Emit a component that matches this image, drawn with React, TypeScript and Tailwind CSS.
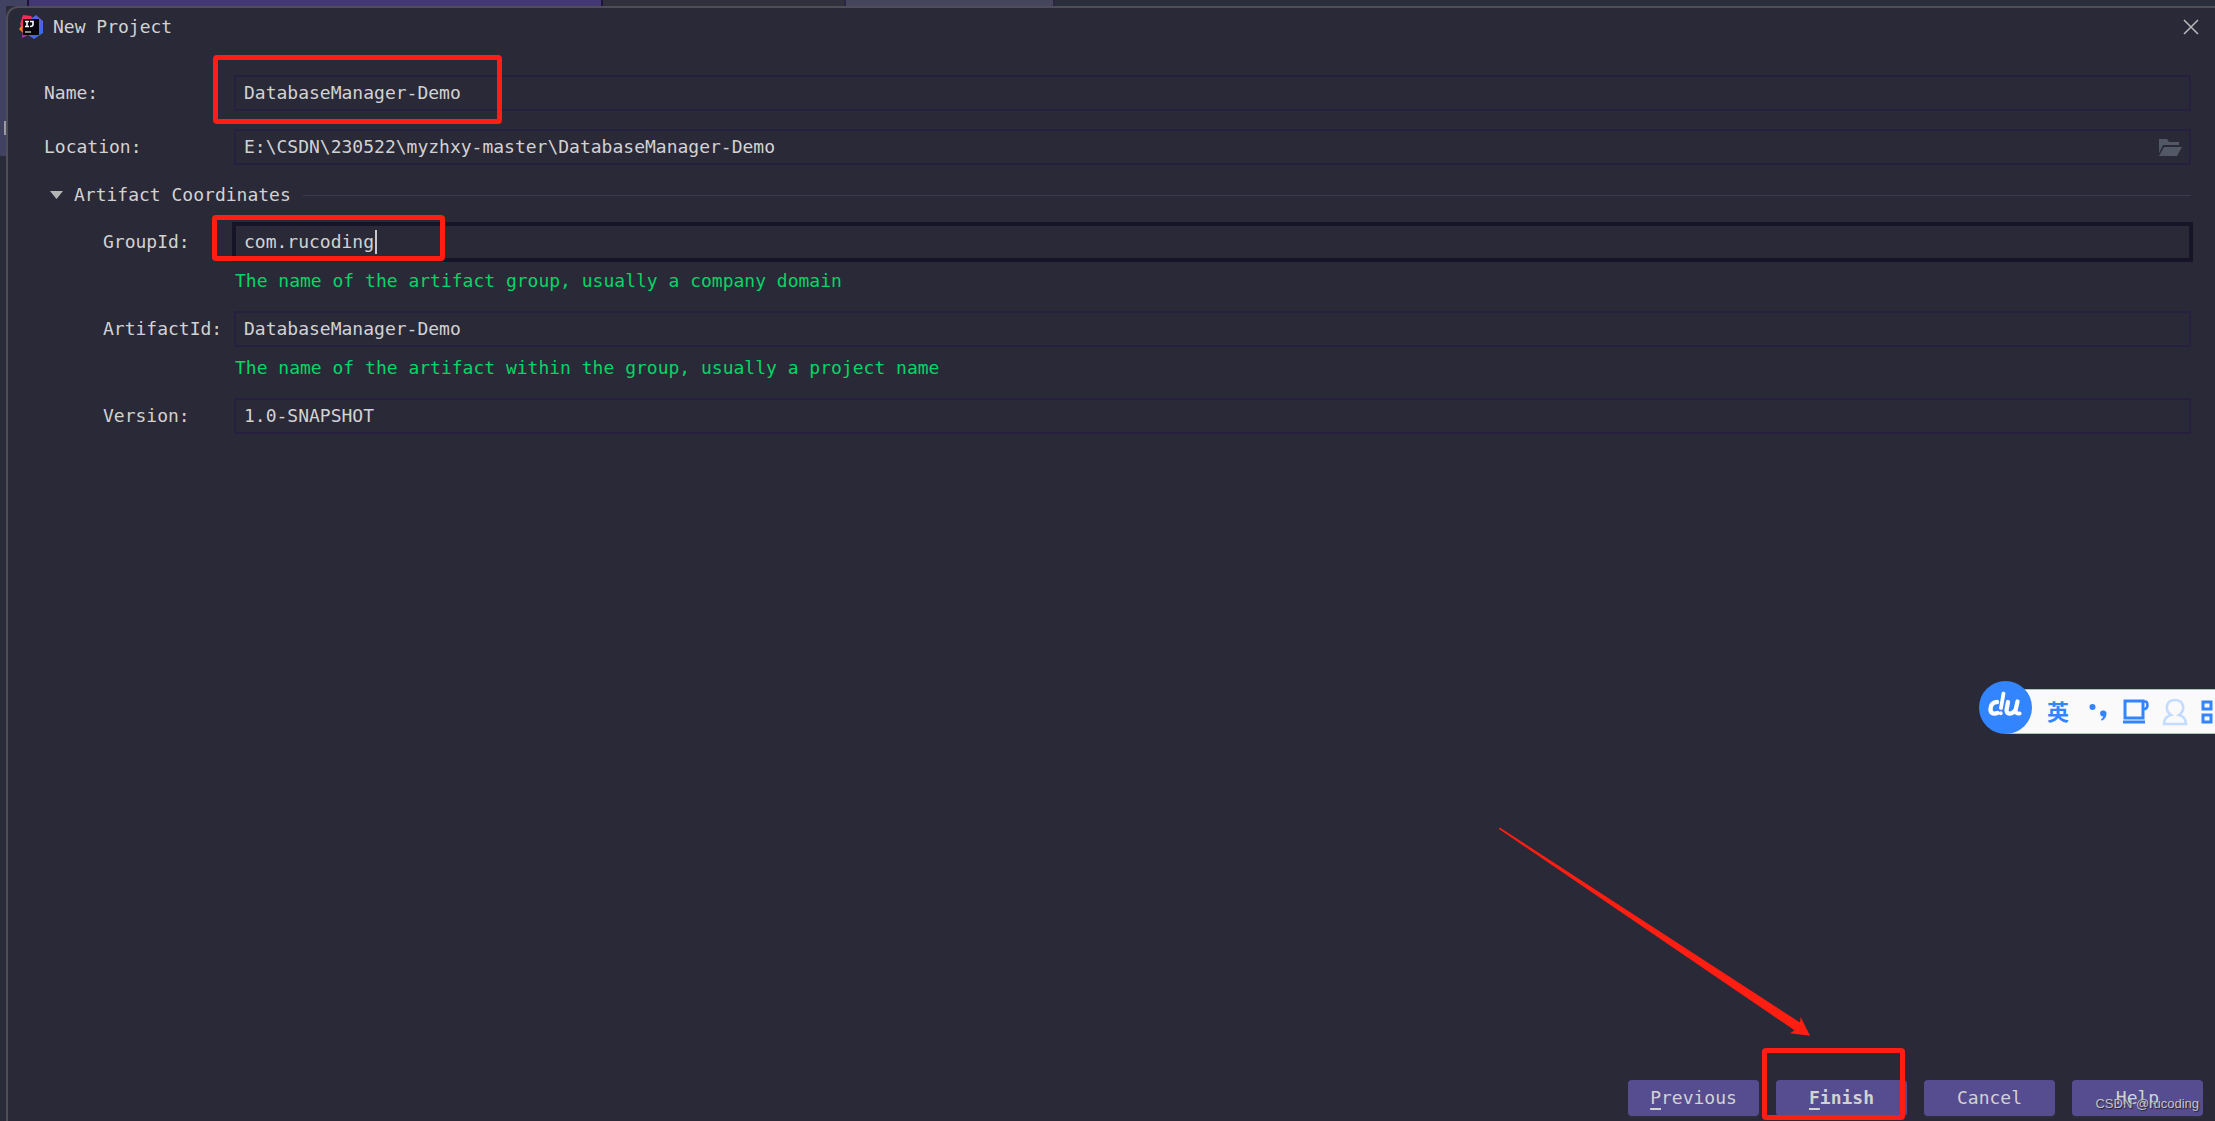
import type { ReactNode } from "react";

const box = "absolute rounded border-[5px] border-[#ff1e12] pointer-events-none";

type FieldProps = {
  id: string;
  label: string;
  value: string;
  nested?: boolean;
  focused?: boolean;
  hint?: string;
  children?: ReactNode;
};

function Field({ id, label, value, nested, focused, hint, children }: FieldProps) {
  return (
    <div>
      <div className="relative flex items-center">
        <label htmlFor={id} className={nested ? "w-[190px] shrink-0 pl-[59px]" : "w-[190px] shrink-0"}>
          {label}
        </label>
        <input
          id={id}
          type="text"
          defaultValue={value}
          className={
            focused
              ? "h-9 min-w-0 flex-1 border-2 border-[#181428] bg-transparent px-2 pb-[2px] outline-2 outline-[#181428]"
              : "h-9 min-w-0 flex-1 border-2 border-[#261f40] bg-transparent px-2 pb-[2px] outline-none"
          }
        />
        {children}
      </div>
      {hint && <p className="mt-[11px] pl-[191px] leading-5 text-[#04d566]">{hint}</p>}
    </div>
  );
}

function IdeaLogo() {
  return (
    <svg viewBox="0 0 24 24" className="size-6" aria-hidden="true">
      <defs>
        <linearGradient id="blue" x1="0" y1="0" x2="1" y2="1">
          <stop offset="0" stopColor="#2f7cf6" />
          <stop offset="0.45" stopColor="#6a58dc" />
          <stop offset="1" stopColor="#1b78f6" />
        </linearGradient>
        <linearGradient id="pink" x1="0" y1="0" x2="0" y2="1">
          <stop offset="0" stopColor="#fe2857" />
          <stop offset="0.6" stopColor="#f0306a" />
          <stop offset="1" stopColor="#9135e0" />
        </linearGradient>
      </defs>
      <path d="M4 0l8 1 3 4-4 14-8 4 1-8-3-6z" fill="url(#pink)" />
      <path d="M3 10l-3 4 4 4z" fill="#fc801d" />
      <path d="M12 4l5-4 7 6v12l-9 6-6-4z" fill="url(#blue)" />
      <path d="M4 4h16v16H4z" fill="#08060a" />
      <path d="M6 6.500h4M8 6.500v5M6 11.500h4M11 6.500h3v3c0 1.500-1 2-3 2" fill="none" stroke="#fff" strokeWidth="1.600" />
      <path d="M6 17h6" stroke="#ddd" strokeWidth="1.200" />
    </svg>
  );
}

function FolderIcon() {
  return (
    <svg viewBox="0 0 23 17" className="h-[17px] w-[23px]" fill="#525866" aria-hidden="true">
      <path d="M0 0h8l2 3h10v3H4L0 14z" />
      <path d="M5 8h18l-5 9H0z" />
    </svg>
  );
}

function ImeBar() {
  return (
    <div className="absolute right-0 top-[681px] flex h-[53px] items-end">
      <div className="z-10 -mr-[27px] flex size-[53px] items-start justify-center rounded-full bg-[#3385ff] pt-[10px]">
        <svg viewBox="0 0 34 26" className="h-[26px] w-[34px]" fill="none" stroke="#fff" strokeLinecap="round" strokeLinejoin="round" aria-hidden="true">
          <path d="M9 11c-4 0-6.500 3-6.500 7s2.500 5.500 7 4" strokeWidth="4.400" />
          <path d="M15.500 2.500L13 17" strokeWidth="3.800" />
          <path d="M12.800 22v.5" strokeWidth="3.600" />
          <path d="M20 11l-1.500 8c0 4.500 5 5 8.500.5" strokeWidth="4.200" />
          <path d="M29.500 10.500l-2 9c0 2.500 1 3 4 3" strokeWidth="4.200" />
        </svg>
      </div>
      <div className="flex h-[45px] items-center border-y border-[#a9bdf0] bg-[#fafafa] pl-[42px] font-['Noto_Sans_CJK_SC',sans-serif] text-[22px] font-bold leading-none text-[#3385ff]">
        <span className="pb-1">英</span>
        <svg viewBox="0 0 18 18" className="ml-5 h-[18px] w-[18px]" fill="#3385ff" aria-hidden="true">
          <circle cx="3.500" cy="4" r="3" />
          <path d="M14 7.500a3 3 0 0 1 3.500 3.200c0 3.300-2 5.800-4.500 7l-1-1.500c1.400-.8 2-1.600 2.200-2.700A3 3 0 0 1 14 7.500z" />
        </svg>
        <svg viewBox="0 0 26 25" className="ml-4 h-[25px] w-[26px]" fill="none" stroke="#3385ff" strokeWidth="3" aria-hidden="true">
          <path d="M2 2h18v17H2zM0 23h22" />
          <path d="M20 2.500h2c3 0 3.500 6 0 7.500h-2" strokeWidth="2.600" />
        </svg>
        <svg viewBox="0 0 26 28" className="ml-[13px] h-7 w-[26px]" fill="none" stroke="#c2dbff" strokeWidth="2.600" aria-hidden="true">
          <path d="M9 17C2 12 4 2 13 2s11 10 4 15c4 1 7 4 7 9H2c0-5 3-8 7-9z" />
        </svg>
        <svg viewBox="0 0 14 24" className="ml-[13px] h-6 w-[14px]" fill="none" stroke="#3385ff" strokeWidth="3" aria-hidden="true">
          <path d="M2 2h8v7H2zM2 15h8v7H2z" />
        </svg>
      </div>
    </div>
  );
}

const button = "h-9 w-[131px] rounded bg-[#564c90] shadow-[0_2px_2px_#302f3b]";

export default function App() {
  return (
    <div className="relative flex min-h-screen flex-col overflow-hidden bg-[#2a2938] font-['DejaVu_Sans_Mono',monospace] text-[18px] leading-6 text-[#d2d2d2]">
      <div className="flex h-[6px] bg-[#2a2d3a]">
        <div className="w-[27px] bg-[#414262]" />
        <div className="w-[576px] border-x-2 border-[#1f1338] bg-[#443874]" />
        <div className="w-[241px] bg-[#31313d]" />
        <div className="w-[211px] border-x-2 border-[#2b2445] bg-[#45455b]" />
      </div>
      <div className="flex flex-1 bg-[#2a2b38]">
        <div className="flex w-[6px] flex-col items-end">
          <div className="h-[150px] w-full bg-[#414262] pl-1 pt-[115px]">
            <div className="h-[14px] bg-[#9a9aa2]" />
          </div>
        </div>
        <main className="flex flex-1 flex-col rounded-tl-xl border-l-2 border-t-2 border-[#4f4e57] bg-[#2a2938]">
          <header className="flex h-[38px] items-center gap-[10px] pl-[11px] pr-4">
            <IdeaLogo />
            <h1 className="flex-1">New Project</h1>
            <button type="button" aria-label="Close">
              <svg viewBox="0 0 16 16" className="size-4" stroke="#b9b9bd" strokeWidth="1.500" aria-hidden="true">
                <path d="M1 1l14 14M15 1L1 15" />
              </svg>
            </button>
          </header>

          <form className="flex flex-1 flex-col pt-[29px]">
            <div className="pl-9 pr-6">
              <Field id="name" label="Name:" value="DatabaseManager-Demo">
                <span className={`${box} -top-5 left-[169px] h-[69px] w-[289px]`} />
              </Field>
              <div className="mt-[18px]">
                <Field id="location" label="Location:" value="E:\CSDN\230522\myzhxy-master\DatabaseManager-Demo">
                  <button type="button" aria-label="Browse" className="absolute right-[9px]">
                    <FolderIcon />
                  </button>
                </Field>
              </div>

              <div className="mt-[18px] flex items-center">
                <button type="button" className="flex items-center gap-[11px] pl-[6px]">
                  <svg viewBox="0 0 13 8" className="h-2 w-[13px]" fill="#b4b4b4" aria-hidden="true">
                    <path d="M0 0h13L6.500 8z" />
                  </svg>
                  Artifact Coordinates
                </button>
                <hr className="ml-3 flex-1 border-[#3b3a50]" />
              </div>

              <div className="mt-[17px] flex flex-col gap-5">
                <Field id="group" label="GroupId:" value="com.rucoding" nested focused hint="The name of the artifact group, usually a company domain">
                  <span className="absolute left-[331px] h-6 w-[2px] bg-[#c8c8c8]" />
                  <span className={`${box} -top-[9px] left-[168px] h-[46px] w-[233px]`} />
                </Field>
                <Field id="artifact" label="ArtifactId:" value="DatabaseManager-Demo" nested hint="The name of the artifact within the group, usually a project name" />
                <Field id="version" label="Version:" value="1.0-SNAPSHOT" nested />
              </div>
            </div>

            <div className="mt-auto flex justify-end gap-[17px] pb-[5px] pr-3">
              <button type="button" className={button}>
                <span className="underline decoration-2 underline-offset-4">P</span>revious
              </button>
              <button type="button" className={`${button} font-bold`}>
                <span className="underline decoration-2 underline-offset-4">F</span>inish
              </button>
              <button type="button" className={button}>Cancel</button>
              <button type="button" className={button}>Help</button>
            </div>
          </form>
        </main>
      </div>

      <ImeBar />
      <svg viewBox="0 0 312 210" className="pointer-events-none absolute bottom-[84px] right-[404px] h-[210px] w-[312px]" fill="#ff1e12" aria-hidden="true">
        <path d="M0 1h1.500L301 195.500l.7-5.500L311 208.700l-20-2.400 4.500-3L0 2z" />
      </svg>
      <span className={`${box} bottom-[1px] right-[310px] h-[72px] w-[143px]`} />
      <span className="absolute bottom-[9px] right-4 font-['Liberation_Sans',sans-serif] text-[13px] leading-4 text-[#c4c3cf] [text-shadow:1px_1px_1px_#222]">
        CSDN @rucoding
      </span>
    </div>
  );
}
